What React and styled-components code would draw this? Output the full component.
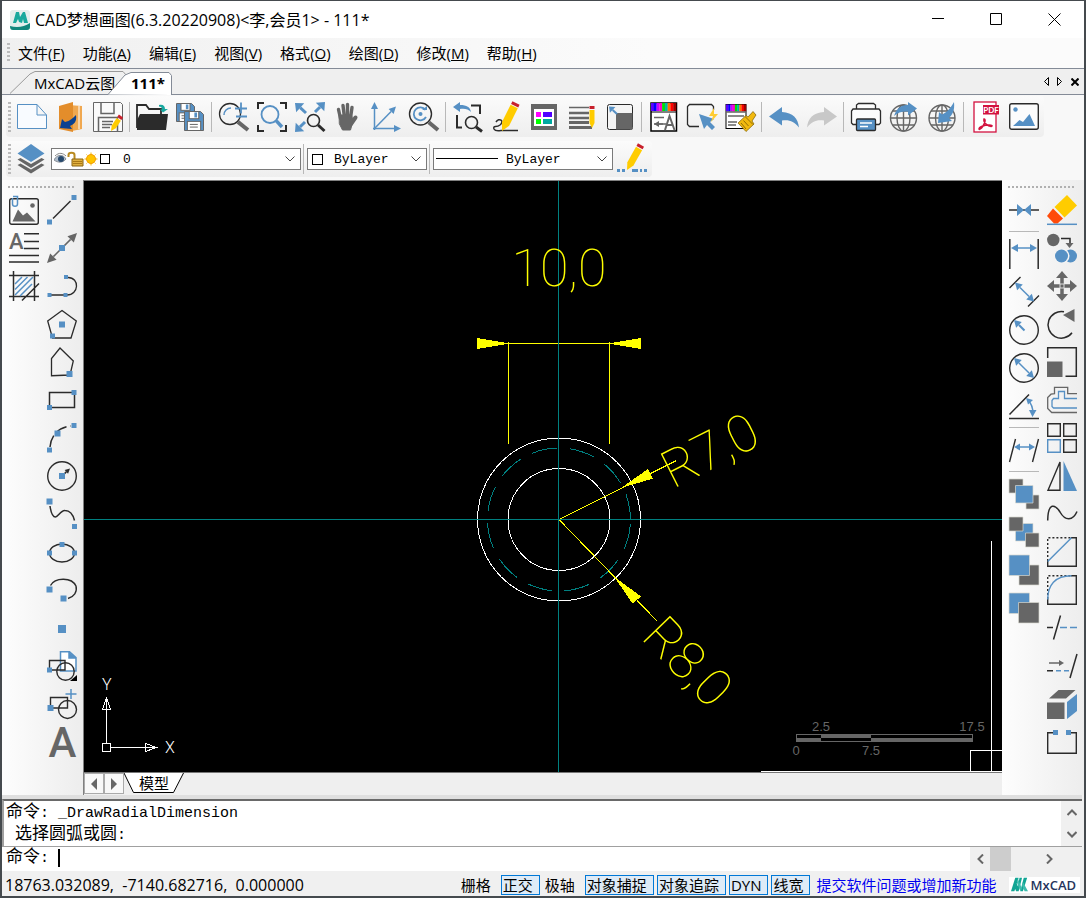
import React, { useState } from "react";
import styled, { createGlobalStyle, ThemeProvider } from "styled-components";

const theme = {
  color: {
    blue: "#5690c4",
    gray: "#666666",
    ink: "#2b2b2b",
    panel: "#f0f0f0",
    line: "#848b97",
    teal: "#008080",
    yellow: "#ffff00",
  },
  font: {
    ui: '"Open Sans", "Noto Sans CJK SC", sans-serif',
    mono: '"Liberation Mono", "Noto Sans CJK SC", monospace',
  },
};

const B = theme.color.blue;
const G = theme.color.gray;
const K = theme.color.ink;

const GlobalStyle = createGlobalStyle`
  * {
    box-sizing: border-box;
  }

  body {
    margin: 0;
    background: #f0f0f0;
    color: #000;
    font-family: ${theme.font.ui};
    font-size: 15px;
  }

  button, select, input {
    font: inherit;
    color: inherit;
    margin: 0;
    padding: 0;
    border: none;
    border-radius: 0;
    background: none;
  }
`;

/* ---------- drawing helpers ---------- */

const Dot = ({ x, y, s = 5 }) => <rect x={x - s / 2} y={y - s / 2} width={s} height={s} fill={B} stroke="none" />;

const Arrow = ({ x1, y1, x2, y2, color = B, size = 7, wide = 4, both = false, w = 1.5 }) => {
  const len = Math.hypot(x2 - x1, y2 - y1);
  const ux = (x2 - x1) / len;
  const uy = (y2 - y1) / len;
  const head = (x, y, dx, dy) =>
    `${x},${y} ${x - dx * size - dy * wide},${y - dy * size + dx * wide} ${x - dx * size + dy * wide},${y - dy * size - dx * wide}`;
  return (
    <g>
      <line
        x1={both ? x1 + ux * size : x1}
        y1={both ? y1 + uy * size : y1}
        x2={x2 - ux * size}
        y2={y2 - uy * size}
        stroke={color}
        strokeWidth={w}
      />
      <polygon points={head(x2, y2, ux, uy)} fill={color} stroke="none" />
      {both && <polygon points={head(x1, y1, -ux, -uy)} fill={color} stroke="none" />}
    </g>
  );
};

const Lens = ({ x, y, r, hx, hy, color = K, w = 1.5, hw = 2.5, handle }) => (
  <g>
    <circle cx={x} cy={y} r={r} stroke={color} strokeWidth={w} />
    <line x1={x + r * 0.75} y1={y + r * 0.75} x2={hx} y2={hy} stroke={handle || color} strokeWidth={hw} />
  </g>
);

const Pencil = ({ tip, top, w = 7 }) => {
  const [x1, y1] = tip;
  const [x2, y2] = top;
  const len = Math.hypot(x2 - x1, y2 - y1);
  const ux = (x2 - x1) / len;
  const uy = (y2 - y1) / len;
  const h = w / 2;
  const p = (d, s) => `${x1 + ux * d - uy * s * h},${y1 + uy * d + ux * s * h}`;
  return (
    <g stroke="none">
      <polygon points={`${x1},${y1} ${p(w, 1)} ${p(len - 4, 1)} ${p(len - 4, -1)} ${p(w, -1)}`} fill="#fc0" />
      <polygon points={`${p(len - 3, 1)} ${p(len, 1)} ${p(len, -1)} ${p(len - 3, -1)}`} fill="#c8202c" />
    </g>
  );
};

const Rainbow = ({ x, y, w, h }) => {
  const list = ["#5a00ff", "#0000ff", "#c800ff", "#ff00c8", "#00e000", "#00b8a0", "#ff7000", "#ff0000", "#a00000"];
  return list.map((c, i) => (
    <rect key={c} x={x + (w / list.length) * i} y={y} width={w / list.length + 0.2} height={h} fill={c} stroke="none" />
  ));
};

const Globe = ({ x, y }) => (
  <g stroke={G} strokeWidth="1.4">
    <circle cx={x} cy={y} r="13" />
    <ellipse cx={x} cy={y} rx="6.5" ry="13" />
    <path d={`M${x} ${y - 13}v26M${x - 13} ${y}h26M${x - 11} ${y - 7}h22M${x - 11} ${y + 7}h22`} />
  </g>
);

const Disk = ({ x, y, s }) => (
  <g>
    <path d={`M${x} ${y}h${s - 3}l3 3v${s - 3}h${-s}z`} fill={B} stroke={G} />
    <rect x={x + s * 0.25} y={y} width={s * 0.5} height={s * 0.38} fill="#fff" stroke={G} />
    <rect x={x + s * 0.52} y={y + 1} width={s * 0.14} height={s * 0.26} fill={B} stroke="none" />
    <rect x={x + s * 0.15} y={y + s * 0.52} width={s * 0.7} height={s * 0.48} fill="#fff" stroke={G} />
    <path d={`M${x + s * 0.28} ${y + s * 0.68}h${s * 0.42}M${x + s * 0.28} ${y + s * 0.82}h${s * 0.42}`} stroke={G} />
  </g>
);

/* ---------- 30 x 30 icon drawings ---------- */

const icons = {
  newFile: <path d="M.5 2.5H20L29.5 13V26.5H.5zM20 2.5V13h9.5" fill="#f8fbff" stroke={B} />,
  openFile: (
    <g stroke="none">
      <path d="M13 3l14 1v23l-10 2z" fill="#f0a850" />
      <path d="M24 4v23" stroke="#fff" />
      <path d="M4 4L18 0v30L4 27z" fill="#e38d2b" />
      <path d="M5 26l2-9 3 3c5-1 8-4 11-7 1 7-2 9-6 11l2 3z" fill="#0a4090" />
    </g>
  ),
  save: (
    <g stroke={G}>
      <path d="M.5.5h27l2 2v27H.5z" fill="#fafafa" />
      <path d="M8 .5v11h13V.5M5.5 29V15.5h19V29" strokeWidth="1.5" />
      <path d="M9 19.5h11M9 22.5h10M9 25.5h8" strokeWidth="1.5" />
      <Pencil tip={[18, 29]} top={[28, 14]} w={5} />
    </g>
  ),
  folder: (
    <g>
      <path d="M0 26V3h9l3 4h12v6" stroke={K} strokeWidth="1.8" />
      <path d="M3 12h28l-2 16H0V18z" fill={K} stroke="none" />
      <path d="M22 3c4-1 6 1 6 4h3l-5 3.500-3-3h2c0-2-1-3-3-3z" fill="#18a8a0" stroke="none" />
    </g>
  ),
  saveAll: (
    <g>
      <Disk x={1.5} y={1.500} s={18} />
      <Disk x={9.5} y={9.5} s={19} />
    </g>
  ),
  zoomScale: (
    <g>
      <Lens x={11} y={12} r={10.500} hx={29} hy={28} w={1.3} hw={4} handle={G} />
      <path d="M5 13c0-4 3-7 7-7" stroke={B} strokeWidth="1.5" />
      <path d="M16 6.5h12M22 .5v11M17 14.5h11" stroke={B} strokeWidth="1.8" />
    </g>
  ),
  zoomWindow: (
    <g>
      <path d="M1 7V1h6M23 1h6v6M29 23v6h-6M7 29H1v-6" stroke={K} strokeWidth="2" />
      <Lens x={13} y={12.5} r={8.5} hx={25} hy={25} color={B} w={1.8} hw={3.500} />
    </g>
  ),
  zoomExtents: (
    <g>
      <Arrow x1={11} y1={11} x2={0} y2={1} size={7} wide={6} w={3} />
      <Arrow x1={20} y1={10} x2={30} y2={0} size={7} wide={6} w={3} />
      <Arrow x1={10} y1={20} x2={0} y2={30} size={7} wide={6} w={3} />
      <Lens x={18.5} y={18.5} r={6} hx={29.5} hy={29} w={1.6} hw={3} />
    </g>
  ),
  pan: (
    <g stroke={G} strokeLinecap="round" strokeWidth="3.400">
      <path d="M5.500 7.500l2 9M10 3.500L11.500 16M14.500 2.500V16M19 5.500L17.500 16" />
      <path d="M22.500 15.500L18 22" strokeWidth="4" />
      <path d="M6.500 13h12l1.500 6-2.500 9H9.500L6.500 22z" fill={G} strokeWidth="1" />
    </g>
  ),
  ucs: (
    <g>
      <Arrow x1={3.5} y1={28} x2={3.500} y2={0} wide={3.5} />
      <Arrow x1={2} y1={26.5} x2={30} y2={26.5} wide={3.5} />
      <Arrow x1={4} y1={26} x2={25} y2={4.5} wide={3.5} />
    </g>
  ),
  zoomRealtime: (
    <g>
      <Lens x={11.500} y={12} r={11} hx={29} hy={28} w={1.4} hw={4} handle={G} />
      <path d="M16.500 8a6.500 6.500 0 1 0 .5 7" stroke={B} strokeWidth="1.800" />
      <circle cx="11.500" cy="12" r="2" fill={B} stroke="none" />
      <path d="M13 8h5V4z" fill={B} stroke="none" />
    </g>
  ),
  zoomPrev: (
    <g>
      <path d="M0 5l7-5v3c7 0 10 2 11 7-3-3-6-3.500-11-3v3z" fill={B} stroke="none" />
      <path d="M4 13v12.500h5M18 3.500h9V12" stroke={K} strokeWidth="2" />
      <Lens x={18.500} y={20.500} r={6} hx={29} hy={29.500} w={1.6} hw={3} />
    </g>
  ),
  sketch: (
    <g>
      <path d="M5 20c3-5 9-1 4 3-4 3-7 0-6 4 1 2 4 2 7 1.500h17" stroke={K} strokeWidth="1.500" />
      <Pencil tip={[11, 29]} top={[25, 1]} w={8} />
    </g>
  ),
  properties: (
    <g stroke="none">
      <path d="M2 2h26v26H2z" fill={G} />
      <path d="M5 7h20v17H5z" fill="#fff" />
      <path d="M7 10h5v5H7z" fill="#f0f" />
      <path d="M14 10h9v5h-9z" fill="#5000ff" />
      <path d="M7 17h5v5H7z" fill="#0f0" />
      <path d="M14 17h9v5h-9z" fill="#00a8a0" />
    </g>
  ),
  lineweight: (
    <g stroke={G}>
      <path d="M2 5.500h20" strokeWidth="1.500" />
      <path d="M2 11h20M2 16h20" strokeWidth="2.500" />
      <path d="M2 20.500h20M2 25.500h23" strokeWidth="3" />
      <Pencil tip={[25, 26]} top={[25, 4]} w={5} />
    </g>
  ),
  viewport: (
    <g>
      <rect x="2.500" y="2.500" width="25" height="25" rx="2" stroke={K} fill="#f4f4f4" />
      <rect x="11" y="11" width="16.500" height="16.500" fill={G} stroke="none" />
      <Arrow x1={12} y1={12} x2={4} y2={4.500} size={5} w={2} />
    </g>
  ),
  textStyle: (
    <g>
      <rect x="2" y="1" width="25.500" height="28" fill="#fff" stroke="#000" strokeWidth="1.500" />
      <Rainbow x={2} y={1} w={25} h={8} />
      <path d="M2 10h25.500" stroke="#000" />
      <path d="M5 15.500h10M5 22h12" stroke={G} strokeWidth="1.500" />
      <Arrow x1={14} y1={22} x2={5} y2={22} color={G} size={5} wide={3} />
      <path d="M16 28l4.500-14L25.500 28M17.500 23h6" stroke={G} strokeWidth="2" />
    </g>
  ),
  quickSelect: (
    <g>
      <path d="M12 24.500H2.500l-2-2v-18l2-2h22l2 2V8" stroke={K} strokeWidth="1.300" />
      <path d="M12 12l15 5-4 3 5 5-3 3-5-5-3 4z" fill={B} stroke="none" />
      <path d="M27 6l-5 8h4l-2 6 7-8h-4z" fill="#fc3" stroke="none" />
    </g>
  ),
  matchProp: (
    <g>
      <rect x="1" y="2.500" width="20" height="24" fill="#fff" stroke="#000" />
      <Rainbow x={1} y={2.500} w={20} h={7} />
      <path d="M1 10h20M3 14h16M3 20h9M3 23h8" stroke={G} strokeWidth="1.500" />
      <path d="M28 9.500l-5 5.500-2-1.500-8 7.500 8 8.500 8-7.500-2-3 4-6z" fill="#f2b90f" stroke="#7a5c00" strokeWidth=".7" />
      <path d="M20 14.500l8 8M16 21l5 6M18.500 18.500l5 5.500" stroke="#7a5c00" strokeWidth=".8" />
    </g>
  ),
  undo: <path d="M0 14.500L13 5v5c11 1 16 6 17 15.500C25 19 20 17.500 13 18.500v5z" fill={B} stroke="none" />,
  redo: <path d="M30 14.500L17 5v5C6 11 1 16 0 25.500c5-6.500 10-8 17-7v5z" fill="#c8c8c8" stroke="none" />,
  print: (
    <g stroke={K} strokeWidth="1.300">
      <path d="M5.500 7V3l2-1.500h15l2 1.500v4M5 22.500H2l-1.500-1.500V9L2 7h26l1.500 2v12L28 22.500h-3" fill="#fcfcfc" />
      <rect x="5.500" y="17" width="19" height="11.500" fill={B} rx="1" />
      <path d="M9 21h12M9 24.500h8" stroke="#fff" strokeWidth="1.500" />
    </g>
  ),
  publish: (
    <g>
      <Globe x={14.500} y={16} />
      <path d="M5 14C8 5 13 3 19 3V0l9 6.500-9 7V9.500C14 9 9 10 5 14z" fill={B} stroke="none" />
    </g>
  ),
  download: (
    <g>
      <Globe x={15} y={16} />
      <path d="M27 0c1 9-2 13-5 16l3 3-14 2 1-11 3 2.500c4-2 8-5 12-12.500z" fill={B} stroke="none" />
    </g>
  ),
  pdf: (
    <g>
      <rect x="3" y="0" width="22" height="30" fill="#fff" stroke="#d3123f" strokeWidth="1.300" />
      <rect x="12" y="3" width="16" height="9.500" fill="#d3123f" stroke="none" />
      <text x="20" y="10.500" fontSize="8" fontWeight="700" fill="#fff" stroke="none" textAnchor="middle" fontFamily="Lato, sans-serif">PDF</text>
      <path d="M13 17c2 0 1 4-1 7-2 3-4 4-4 3 0-2 5-4 10-4 3 0 4 1 2 1.500-3 0-8-4-7-7.500z" stroke="#d3123f" strokeWidth="1.500" />
    </g>
  ),
  image: (
    <g>
      <rect x=".7" y="1.700" width="28.600" height="25.600" rx="2" fill="#fcfcfc" stroke={K} strokeWidth="1.400" />
      <circle cx="6.500" cy="7.500" r="2.200" fill={B} stroke="none" />
      <path d="M4 24l6.500-6 3.500 2 6.500-8L26 24z" fill={B} stroke="none" />
    </g>
  ),
  layers: (
    <g stroke="none">
      <path d="M.5 21l3-1.500 10.500 6 10.500-6 3 1.500L14 29.500z" fill={G} />
      <path d="M.5 15.500l3-1.500L14 20l10.500-6 3 1.500L14 24z" fill={G} />
      <path d="M14 0l13.500 9.500L14 18 .5 9.500z" fill={B} />
    </g>
  ),
  linePencil: (
    <g>
      <path d="M0 26.500h3M5 26.500h3M15 26.500h6M23 26.500h2M27 26.500h3" stroke={B} strokeWidth="3" />
      <Pencil tip={[10, 26]} top={[24, 1]} w={7} />
    </g>
  ),

  /* draw panel */
  rasterImage: (
    <g>
      <rect x=".7" y="3.700" width="28.600" height="25.600" rx="2" stroke={K} strokeWidth="1.400" />
      <path d="M3.500 26.500L9 14.500l5 6 4-3 8.500 9z" fill={G} stroke="none" />
      <circle cx="23.500" cy="10.500" r="2.300" fill={G} stroke="none" />
      <path d="M3.500 3v6c0 3 5 3 5 0V1.500H4" stroke={B} strokeWidth="1.500" />
    </g>
  ),
  mtext: (
    <g stroke={K} strokeWidth="1.500">
      <text x="0" y="16" fontSize="22" fontWeight="500" fill={G} stroke="none" fontFamily="Roboto, sans-serif">A</text>
      <path d="M15 .8h15M15 8.500h15M15 15.500h15M0 22.500h30M0 29h30" />
    </g>
  ),
  hatch: (
    <g stroke={K} strokeWidth="1.500">
      <path d="M4.500 0v30M25.500 0v30M0 4.500h30M0 25.500h30M13 29.500l17-17" />
      <path d="M6 13l7-7M6 18.500L18.500 6M6 24L24 6M12 24l11-11M18 18l-7 7" stroke={B} />
    </g>
  ),
  line: (
    <g>
      <path d="M6 23.500L23.500 6" stroke={K} strokeWidth="1.500" />
      <Dot x={2.500} y={27} /><Dot x={27} y={2.500} />
    </g>
  ),
  xline: (
    <g>
      <Arrow x1={0} y1={30} x2={30} y2={0} color={G} size={9} wide={4.500} both />
      <Dot x={15} y={15} s={6} />
    </g>
  ),
  pline: (
    <g>
      <path d="M4 24h14M21 6.500c12 0 11 17.500-1 17.500" stroke={K} strokeWidth="1.300" />
      <Dot x={19} y={6} s={4} /><Dot x={2.500} y={24} s={4} /><Dot x={18.500} y={24} s={4} />
    </g>
  ),
  polygon: (
    <g>
      <path d="M15 1.500L29.300 12 24 29H5.500L.7 12z" stroke={K} strokeWidth="1.300" />
      <Dot x={15} y={15.500} s={6} /><Dot x={5.500} y={27} />
    </g>
  ),
  freePolygon: (
    <g>
      <path d="M13 1l13.300 13-3.300 14-18.500.7V11.500z" stroke={K} strokeWidth="1.300" />
      <Dot x={22.500} y={27} s={6} />
    </g>
  ),
  rectangle: (
    <g>
      <rect x="2.500" y="7.500" width="25" height="15" stroke={K} strokeWidth="1.500" />
      <Dot x={27} y={7.500} /><Dot x={2.500} y={22.500} />
    </g>
  ),
  arc: (
    <g>
      <path d="M3 24C4 12 12 4 24 3" stroke={K} strokeWidth="1.500" strokeDasharray="12 4" />
      <Dot x={2.500} y={27} /><Dot x={10.500} y={10.500} s={6} /><Dot x={27} y={2.500} />
    </g>
  ),
  circle: (
    <g>
      <circle cx="15" cy="15" r="14.300" stroke={K} strokeWidth="1.400" />
      <Arrow x1={15} y1={15} x2={23} y2={7.500} color={K} size={5} wide={2.500} />
      <Dot x={15} y={15} s={6} />
    </g>
  ),
  spline: (
    <g>
      <path d="M3 7c1 7 3 11 5.500 11S14 11 18 11.500c5 0 8 4 9.500 10" stroke={K} strokeWidth="1.500" />
      <Dot x={2.500} y={2.500} s={6} /><Dot x={27.500} y={27.500} />
    </g>
  ),
  ellipse: (
    <g>
      <ellipse cx="15" cy="16" rx="12.500" ry="9" stroke={K} strokeWidth="1.400" />
      <Dot x={15} y={7.500} /><Dot x={2.500} y={16} /><Dot x={27.500} y={16} />
    </g>
  ),
  ellipseArc: (
    <g>
      <path d="M3.500 10.500C8 2 25 2 29 11c1.500 6-2 11-8 12.500" stroke={K} strokeWidth="1.400" />
      <Dot x={2.500} y={14.500} s={6} /><Dot x={16.500} y={23.500} s={6} />
    </g>
  ),
  point: <Dot x={15} y={16} s={8} />,
  insertBlock: (
    <g>
      <path d="M13.500 20V.7h9l6.500 6V20zM22 .7V7h7" fill="#fff" stroke={B} strokeWidth="1.500" />
      <path d="M22 .7V7h7z" fill={B} stroke="none" />
      <path d="M2.500 9.500h15.500V19H2.500z" stroke={K} strokeWidth="1.400" />
      <circle cx="18.500" cy="20.500" r="8.700" stroke={K} strokeWidth="1.400" />
      <path d="M30 24v6h-7z" fill="#000" stroke="none" />
      <Dot x={2.500} y={19} />
    </g>
  ),
  makeBlock: (
    <g>
      <path d="M3.500 8.500h17V19h-17z" stroke={K} strokeWidth="1.400" />
      <circle cx="20.500" cy="20.500" r="9" stroke={K} strokeWidth="1.400" />
      <path d="M18.500 5h11M24 0v10" stroke={B} strokeWidth="1.500" />
      <Dot x={3.500} y={19} s={6} />
    </g>
  ),
  text: <text x="15.500" y="30" fontSize="42" fontWeight="500" fill={G} stroke="none" textAnchor="middle" fontFamily="Roboto, sans-serif">A</text>,

  /* dimension panel */
  join: (
    <g>
      <path d="M0 15h30" stroke={K} strokeWidth="1.500" />
      <path d="M8 9v12l7-6zM22 9v12l-7-6z" fill={B} stroke="none" />
    </g>
  ),
  dimLinear: (
    <g>
      <path d="M.8 0v30M29.200 0v30" stroke={K} strokeWidth="1.500" />
      <Arrow x1={2} y1={9} x2={28} y2={9} both />
    </g>
  ),
  dimAligned: (
    <g>
      <path d="M.5 11L11.500 0M19 29.500L30 18.500" stroke={K} strokeWidth="1.400" />
      <Arrow x1={6} y1={5.500} x2={25} y2={24.500} both />
    </g>
  ),
  dimRadius: (
    <g>
      <circle cx="15" cy="15" r="14.300" stroke={K} strokeWidth="1.400" />
      <Arrow x1={15.500} y1={15.500} x2={5} y2={5} w={2} />
    </g>
  ),
  dimDiameter: (
    <g>
      <circle cx="15" cy="15" r="14.300" stroke={K} strokeWidth="1.400" />
      <Arrow x1={5} y1={5} x2={25} y2={25} both />
    </g>
  ),
  dimAngular: (
    <g>
      <path d="M.5 23.500L20 3.500M0 27.500h30" stroke={K} strokeWidth="1.500" />
      <path d="M19 9c4 4 5 8 5 14" stroke={B} strokeWidth="1.500" />
      <path d="M17 7l7 2-5 4.500zM20 19h7.500L23.500 26z" fill={B} stroke="none" />
    </g>
  ),
  dimOblique: (
    <g>
      <path d="M.5 27l6-23M23.500 27l6-23" stroke={K} strokeWidth="1.400" />
      <Arrow x1={5} y1={12} x2={26} y2={12} size={6} wide={3.500} both />
    </g>
  ),
  orderFront: (
    <g stroke="#d8d8d0" strokeWidth=".7">
      <path d="M0 0h14v14H0zM17 16h13v14H17z" fill={G} />
      <path d="M6.500 6.500H24V24H6.500z" fill={B} />
    </g>
  ),
  orderBack: (
    <g stroke="#d8d8d0" strokeWidth=".7">
      <path d="M6.500 6.500H24V24H6.500z" fill={B} />
      <path d="M0 0h14v14H0zM16.500 16H30v14H16.500z" fill={G} />
    </g>
  ),
  orderAbove: (
    <g stroke="#d8d8d0" strokeWidth=".7">
      <path d="M10 10h20v20H10z" fill={G} />
      <path d="M0 0h20.500v20.500H0z" fill={B} />
    </g>
  ),
  orderUnder: (
    <g stroke="#d8d8d0" strokeWidth=".7">
      <path d="M0 0h20.500v20.500H0z" fill={B} />
      <path d="M9.500 9.500H30V30H9.500z" fill={G} />
    </g>
  ),

  /* modify panel */
  erase: (
    <g stroke="none">
      <path d="M20 0l10 10.500L17.500 22.500 7.500 12z" fill="#fc0" />
      <path d="M6 13.500l10 10-5.500 5H7l-7-7.500z" fill="#ff4b0a" />
      <path d="M0 29.300h30" stroke={B} strokeWidth="1.500" />
    </g>
  ),
  copy: (
    <g stroke="none">
      <circle cx="6.300" cy="7" r="6.200" fill={G} />
      <path d="M14 5.500h9V11" stroke={K} strokeWidth="1.500" />
      <path d="M18.500 10h8L22.500 15z" fill={G} />
      <circle cx="23.500" cy="23" r="6.500" fill={B} />
      <circle cx="15" cy="23" r="7.500" fill="#f4f4f4" />
      <circle cx="14.500" cy="23" r="6.500" fill={B} />
    </g>
  ),
  move: (
    <g>
      <Arrow x1={15} y1={0} x2={15} y2={30} color={G} size={7} wide={6} w={3.500} both />
      <Arrow x1={0} y1={15} x2={30} y2={15} color={G} size={7} wide={6} w={3.500} both />
      <rect x="13" y="13" width="4" height="4" fill={G} stroke="#ddd" />
    </g>
  ),
  rotate: (
    <g>
      <path d="M17 2.800a13.300 13.300 0 1 0 8 21" stroke={K} strokeWidth="1.500" />
      <path d="M16 6L27.500 0v13z" fill={G} stroke="none" />
    </g>
  ),
  scale: (
    <g>
      <path d="M.7 11V.7h28.600v28.600H18.500" stroke={K} strokeWidth="1.500" />
      <path d="M0 14.500h15.500V30H0z" fill={G} stroke="none" />
    </g>
  ),
  offset: (
    <g strokeWidth="1.300">
      <path d="M30 8.700h-9.300V2.300H7.500v6.400L4 9.200.7 12.500v11l4 4H30" stroke={G} />
      <path d="M30 13.500H17.500v-7h-6v7H6.500l-1.500 2v6l1.500 1.500H30" stroke={B} />
    </g>
  ),
  array: (
    <g stroke={K} strokeWidth="1.400">
      <path d="M.7.7h12.600v12.600H.7zM16.700.7h12.600v12.600H16.700zM16.700 16.700h12.600v12.600H16.700z" />
      <path d="M.7 16.700h12.600v12.600H.7z" stroke={B} />
    </g>
  ),
  mirror: (
    <g>
      <path d="M13 1v28.300H1z" stroke={K} strokeWidth="1.400" />
      <path d="M16.500 0L30 30H16.500z" fill={B} stroke="none" />
    </g>
  ),
  wave: <path d="M.7 21.500C1 3 8 5 13 13c5 9 13 9 17-.5" stroke={K} strokeWidth="1.500" />,
  chamfer: (
    <g stroke={K} strokeWidth="1.400">
      <path d="M.7 24v5.300h28.600V.7H24" />
      <path d="M.7 24V.7H24" strokeDasharray="2 2" />
      <path d="M.7 24.500L24.500.7" stroke={B} />
    </g>
  ),
  fillet: (
    <g stroke={K} strokeWidth="1.400">
      <path d="M.7 24v5.300h28.600V.7H24" />
      <path d="M.7 24V.7H24" strokeDasharray="2 2" />
      <path d="M.7 24.500C.7 10 8 .7 24.500.7" stroke={B} />
    </g>
  ),
  breakLine: (
    <g stroke={K} strokeWidth="1.500">
      <path d="M0 14.500h6M13.500 2.500l-7 24" />
      <path d="M13 14.500h7M23 14.500h7" stroke={B} />
    </g>
  ),
  extend: (
    <g stroke={K} strokeWidth="1.500">
      <Arrow x1={2} y1={12} x2={17} y2={12} color={G} size={5} wide={3} />
      <path d="M0 19.700h6M30 3l-7 24" />
      <path d="M9 19.700h5M17 19.700h5" stroke={B} />
    </g>
  ),
  explode: (
    <g stroke="none">
      <path d="M0 13.500h17.500V30H0zM2 9.500L11.500 1h17L19 9.500z" fill={G} />
      <path d="M20 13l10-8v17l-10 8z" fill={B} />
    </g>
  ),
  gap: (
    <g>
      <path d="M11 5.700H8M6 5.700H.7v20.600h28.600V5.700H24M22 5.700h-2" stroke={K} strokeWidth="1.400" />
      <Dot x={8.500} y={5.500} /><Dot x={21.500} y={5.500} />
    </g>
  ),
};

const Icon = ({ name }) => (
  <svg width="30" height="30" viewBox="0 0 30 30" fill="none" overflow="visible" aria-hidden="true">
    {icons[name]}
  </svg>
);

/* "|" is a separator */
const standardBar = [
  "newFile", "openFile", "save", "|", "folder", "saveAll", "|",
  "zoomScale", "zoomWindow", "zoomExtents", "pan", "ucs", "zoomRealtime", "|",
  "zoomPrev", "sketch", "properties", "lineweight", "viewport", "|",
  "textStyle", "quickSelect", "matchProp", "|", "undo", "redo", "|",
  "print", "publish", "download", "|", "pdf", "image",
];

const drawLeft = ["rasterImage", "mtext", "hatch"];
const drawRight = [
  "line", "xline", "pline", "polygon", "freePolygon", "rectangle", "arc", "circle",
  "spline", "ellipse", "ellipseArc", "point", "insertBlock", "makeBlock", "text",
];
const dimensionList = [
  "join", "|", "dimLinear", "dimAligned", "dimRadius", "dimDiameter", "dimAngular", "|",
  "dimOblique", "|", "orderFront", "orderBack", "orderAbove", "orderUnder",
];
const modifyList = [
  "erase", "copy", "move", "rotate", "scale", "offset", "array", "mirror",
  "wave", "chamfer", "fillet", "breakLine", "extend", "explode", "gap",
];

const menus = [
  ["文件", "F"], ["功能", "A"], ["编辑", "E"], ["视图", "V"],
  ["格式", "O"], ["绘图", "D"], ["修改", "M"], ["帮助", "H"],
];

const Tools = ({ list, vertical }) =>
  list.map((name, i) =>
    name === "|" ? (
      <Separator key={i} $vertical={vertical} />
    ) : (
      <ToolButton key={i} type="button" aria-label={name}>
        <Icon name={name} />
      </ToolButton>
    )
  );

const Chevron = () => (
  <svg width="10" height="6" viewBox="0 0 10 6" fill="none" stroke="#444" aria-hidden="true">
    <path d="M.5.500L5 5 9.500.500" />
  </svg>
);

const ColorBox = () => (
  <svg width="11" height="11" viewBox="0 0 11 11" aria-hidden="true">
    <rect x=".5" y=".5" width="10" height="10" fill="#fff" stroke="#000" />
  </svg>
);

const LayerState = () => (
  <svg width="57" height="16" viewBox="0 0 57 16" fill="none" aria-hidden="true">
    <path d="M0 9C3 3 9 3 12 8 9 12 4 12 0 9z" fill="#aebccb" stroke="#8a8f96" />
    <circle cx="7" cy="8" r="3" fill="#27496d" />
    <path d="M1 5c4-4 8-3 11 0" stroke="#888" />
    <path d="M14.500 6V4c0-3 6-3 6 0v5" stroke="#b88a20" strokeWidth="2" />
    <path d="M18 8h11v7H18z" fill="#e0b040" stroke="#8a6510" />
    <path d="M19 10.500h9M19 12.500h9" stroke="#a87818" />
    <circle cx="37" cy="8" r="4.500" fill="#ffc400" stroke="#f39a00" />
    <path d="M37 1.500v2M37 12.500v2M30.500 8h2M41.500 8h2M32.500 3.500l1 1M41.500 3.500l-1 1M32.500 12.500l1-1M41.500 12.500l-1-1" stroke="#f7b500" />
    <rect x="46.500" y="3.500" width="9" height="9" fill="#fff" stroke="#000" />
  </svg>
);

const LineSample = () => (
  <svg width="62" height="2" aria-hidden="true">
    <path d="M0 .500h62" stroke="#000" />
  </svg>
);

const MxLogo = ({ size, color = "#12a594" }) => (
  <svg width={size} height={size} viewBox="0 0 20 20" aria-hidden="true">
    <path d="M5 2h4l-5 16H0zM10 2h3l-4 16H6l-2-5 2-6 2 5zM15 2h4l-5 16h-3z" fill={color} />
    <path d="M14 7l6 11h-4l-3-7zM8 3l5 12-2 3-4-10z" fill="#3fbcae" />
  </svg>
);

const AppMark = () => (
  <svg width="20" height="20" viewBox="0 0 20 20" aria-hidden="true">
    <rect width="20" height="20" rx="3" fill="#e3eeec" />
    <path d="M0 16c7 2 14 1 20-3v4c0 2-1 3-3 3H3c-2 0-3-1-3-4z" fill="#12867c" />
    <path d="M6 2h3l1 5 3-5h2l3 11h-4l-1-4-1 4-3-1-1-3-2 4H3z" fill="#18a99d" />
  </svg>
);

/* ---------- drawing area ---------- */

const Drawing = () => (
  <Canvas viewBox="84 181 918 591" preserveAspectRatio="xMidYMid slice" role="img" aria-label="模型">
    <g fill="none" shapeRendering="crispEdges">
      <g stroke="#fff">
        <circle cx="559" cy="519.500" r="81.500" />
        <circle cx="559" cy="519.500" r="51" />
        <path d="M991.500 541v231M761 771.500h241M970.500 771.500v-21H1002" />
      </g>
      <path
        d="M630.500 519.500a71.500 71.500 0 1 0 -143 0a71.500 71.500 0 1 0 143 0"
        stroke={theme.color.teal}
        strokeDasharray="25.500 12.500"
      />
      <g stroke={theme.color.yellow}>
        <path d="M508 343.500h102M508.500 342v102M609.500 342v102" />
        <path d="M559 519.500L676.500 460.500M559 519.500L657.500 621.500" />
        <g fill={theme.color.yellow} stroke="none">
          <path d="M510 343.500L477 338v11zM608 343.500l33-5.500v11z" />
          <path d="M621 488L648 469l5 9.500zM614 576.500l27 20-8.500 7z" />
        </g>
      </g>
      <path d="M558.500 181v591" stroke={theme.color.teal} />
      <path d="M84 519.500h918" stroke={theme.color.teal} />
      <g stroke="#fff">
        <path d="M102.500 743.500h8v8h-8zM106.500 743V698M111 747.500h46M106.500 698l-4 11h8zM156.500 747.500l-11-4v8z" />
      </g>
      <g fill={G}>
        <path d="M796 734h177v8H796zM797 735v3h24v-3zM871 735v3h101v-3zM821 738v3h50v-3z" fillRule="evenodd" />
      </g>
    </g>
    <CadText x="559" y="286" textAnchor="middle">10,0</CadText>
    <CadText transform="translate(673 489) rotate(-26.800)">R7,0</CadText>
    <CadText transform="translate(640 638) rotate(45.900)">R8,0</CadText>
    <AxisText x="102" y="690">Y</AxisText>
    <AxisText x="165" y="753">X</AxisText>
    <ScaleText x="821" y="731">2.5</ScaleText>
    <ScaleText x="972" y="731">17.5</ScaleText>
    <ScaleText x="796" y="755">0</ScaleText>
    <ScaleText x="871" y="755">7.5</ScaleText>
  </Canvas>
);

const App = () => {
  const [toggles, setToggles] = useState({
    栅格: false, 正交: true, 极轴: false, 对象捕捉: true, 对象追踪: true, DYN: true, 线宽: true,
  });

  const flip = (name) => setToggles({ ...toggles, [name]: !toggles[name] });

  return (
    <ThemeProvider theme={theme}>
      <GlobalStyle />
      <Window>
        <TitleBar>
          <AppMark />
          <h1>CAD梦想画图(6.3.20220908)&lt;李,会员1&gt; - 111*</h1>
          <button type="button" aria-label="minimize">
            <svg width="13" height="13" stroke="#000"><path d="M0 5.500h12" /></svg>
          </button>
          <button type="button" aria-label="maximize">
            <svg width="13" height="13" stroke="#000" fill="none"><path d="M.5.500h11v11H.5z" /></svg>
          </button>
          <button type="button" aria-label="close">
            <svg width="13" height="13" stroke="#000"><path d="M.5.500l12 12M12.500.500l-12 12" /></svg>
          </button>
        </TitleBar>

        <MenuBar>
          <Grip $size={20} />
          {menus.map(([label, key]) => (
            <button key={key} type="button">{label}(<u>{key}</u>)</button>
          ))}
        </MenuBar>

        <DocTabs>
          <DocTab type="button" $width={117}>
            <svg width="117" height="23" fill="#f0f0f0" stroke="#9a9a9a" aria-hidden="true">
              <path d="M0 22.500L20 3l5-2.500h88l3.500 4V23" />
            </svg>
            <span>MxCAD云图</span>
          </DocTab>
          <DocTab type="button" $width={64} $active>
            <svg width="64" height="23" fill="#fff" stroke="#848b97" aria-hidden="true">
              <path d="M0 22.500L17 3l6-2.500h38l2.500 3V23" />
            </svg>
            <span>111*</span>
          </DocTab>
          <TabControls>
            <button type="button" aria-label="previous tab">
              <svg width="6" height="9" fill="none" stroke="#000"><path d="M5.500.5v8l-4-4z" /></svg>
            </button>
            <button type="button" aria-label="next tab">
              <svg width="6" height="9" fill="none" stroke="#000"><path d="M.5.500v8l4-4z" /></svg>
            </button>
            <button type="button" aria-label="close tab">
              <svg width="8" height="8" stroke="#000" strokeWidth="2"><path d="M.5.500l7 7M7.500.500l-7 7" /></svg>
            </button>
          </TabControls>
        </DocTabs>

        <Rebar>
          <Toolbar $height={41}>
            <Grip $size={30} />
            <Tools list={standardBar} />
          </Toolbar>
          <Toolbar $height={36}>
            <Grip $size={30} />
            <Tools list={["layers"]} />
            <Combo $width={250} $gap={12}>
              <LayerState />
              <select aria-label="layer"><option>0</option></select>
              <Chevron />
            </Combo>
            <Separator />
            <Combo $width={120} $gap={11} $inset={4}>
              <ColorBox />
              <select aria-label="color"><option>ByLayer</option></select>
              <Chevron />
            </Combo>
            <Separator />
            <Combo $width={180} $gap={8}>
              <LineSample />
              <select aria-label="linetype"><option>ByLayer</option></select>
              <Chevron />
            </Combo>
            <Tools list={["linePencil"]} />
          </Toolbar>
        </Rebar>

        <Body>
          <SidePanel>
            <DotRow />
            <div><Tools list={drawLeft} vertical /></div>
            <div><Tools list={drawRight} vertical /></div>
          </SidePanel>
          <Center>
            <Drawing />
            <SheetTabs>
              <SheetArrow type="button" aria-label="previous sheet">
                <svg width="6" height="12" fill={G}><path d="M6 0v12L0 6z" /></svg>
              </SheetArrow>
              <SheetArrow type="button" aria-label="next sheet">
                <svg width="6" height="12" fill={G}><path d="M0 0v12l6-6z" /></svg>
              </SheetArrow>
              <SheetTab type="button">
                <svg width="60" height="20" fill="#fff" stroke="#000" aria-hidden="true">
                  <path d="M0 0l9.500 19.500h40L59.500 0" />
                </svg>
                <span>模型</span>
              </SheetTab>
            </SheetTabs>
          </Center>
          <SidePanel $right>
            <DotRow />
            <div><Tools list={dimensionList} vertical /></div>
            <div><Tools list={modifyList} vertical /></div>
          </SidePanel>
        </Body>

        <CommandPanel>
          <History>
            <div>
              <p><span>命令</span>: _DrawRadialDimension</p>
              <p> <span>选择圆弧或圆</span>:</p>
            </div>
            <ScrollV>
              <button type="button" aria-label="scroll up">
                <svg width="10" height="7" fill="none" stroke={G} strokeWidth="2"><path d="M.5 6L5 1.500 9.500 6" /></svg>
              </button>
              <button type="button" aria-label="scroll down">
                <svg width="10" height="7" fill="none" stroke={G} strokeWidth="2"><path d="M.5 1L5 5.500 9.500 1" /></svg>
              </button>
            </ScrollV>
          </History>
          <CommandLine>
            <label htmlFor="command"><span>命令</span>:</label>
            <Caret />
            <input id="command" type="text" />
            <ScrollH>
              <button type="button" aria-label="scroll left">
                <svg width="7" height="10" fill="none" stroke={G} strokeWidth="2"><path d="M6 .500L1.500 5 6 9.500" /></svg>
              </button>
              <i />
              <button type="button" aria-label="scroll right">
                <svg width="7" height="10" fill="none" stroke={G} strokeWidth="2"><path d="M1 .500L5.500 5 1 9.500" /></svg>
              </button>
            </ScrollH>
          </CommandLine>
        </CommandPanel>

        <StatusBar>
          <output>18763.032089,&nbsp; -7140.682716,&nbsp; 0.000000</output>
          {Object.keys(toggles).map((name) => (
            <Toggle key={name} type="button" $on={toggles[name]} aria-pressed={toggles[name]} onClick={() => flip(name)}>
              {name}
            </Toggle>
          ))}
          <a href="#feedback">提交软件问题或增加新功能</a>
          <Brand><MxLogo size={17} />MxCAD</Brand>
        </StatusBar>
      </Window>
    </ThemeProvider>
  );
};

/* ---------- styles ---------- */

const Window = styled.div`
  display: flex;
  flex-direction: column;
  min-height: 100vh;
  background: ${({ theme }) => theme.color.panel};
  border: solid #454a4e;
  border-width: 1px 2px 2px 2px;
  cursor: default;
`;

const TitleBar = styled.header`
  display: flex;
  align-items: center;
  height: 37px;
  padding: 0 1px 0 8px;
  background: #fff;

  h1 {
    flex: 1;
    margin: 0 0 0 5px;
    font-size: 16px;
    font-weight: 400;
    line-height: 22px;
  }

  button {
    display: grid;
    place-items: center;
    width: 58px;
    height: 100%;
  }
`;

const MenuBar = styled.nav`
  display: flex;
  align-items: center;
  gap: 18px;
  height: 30px;
  padding-left: 5px;
  background: linear-gradient(90deg, #f0f0f0, #fbfbfb 60%);

  button {
    margin-bottom: 2px;
    white-space: nowrap;
  }

  button:first-of-type {
    margin-left: -10px;
  }
`;

const Grip = styled.span`
  flex: none;
  width: 3px;
  height: ${({ $size }) => $size}px;
  background: repeating-linear-gradient(#bbb 0 2px, transparent 2px 4px);
`;

const DocTabs = styled.div`
  display: flex;
  align-items: flex-end;
  height: 27px;
  padding-left: 8px;
  background: #efefef;
  border: solid ${({ theme }) => theme.color.line};
  border-width: 1px 0;
`;

const DocTab = styled.button`
  position: relative;
  width: ${({ $width }) => $width}px;
  height: 23px;
  margin-right: -19px;
  margin-bottom: ${({ $active }) => ($active ? "-1px" : 0)};
  padding-left: ${({ $active }) => ($active ? "23px" : "24px")};
  padding-bottom: 1px;
  font-weight: ${({ $active }) => ($active ? 700 : 400)};
  text-align: left;
  white-space: nowrap;

  svg {
    position: absolute;
    inset: 0;
  }

  span {
    position: relative;
  }
`;

const TabControls = styled.div`
  display: flex;
  align-items: center;
  align-self: center;
  gap: 8px;
  margin-left: auto;
  padding-right: 5px;

  button {
    display: grid;
  }
`;

const Rebar = styled.div`
  display: flex;
  flex-direction: column;
  align-items: flex-start;
  gap: 4px;
  padding: 1px 0 3px 4px;
  background: #f8f8f8;
`;

const Toolbar = styled.div`
  display: flex;
  align-items: center;
  height: ${({ $height }) => $height}px;
  padding: 0 1px 0 2px;
  border-radius: 4px;
  background: linear-gradient(#fbfbfb, #eeeeee);

  ${Grip} {
    margin-right: 2px;
  }
`;

const ToolButton = styled.button`
  display: grid;
  flex: none;
  place-items: center;
  width: 38px;
  height: 38px;

  &:hover {
    background: #dcebf7;
  }
`;

const Separator = styled.span`
  flex: none;
  display: block;
  width: ${({ $vertical }) => ($vertical ? "30px" : "1px")};
  height: ${({ $vertical }) => ($vertical ? "1px" : "30px")};
  margin: ${({ $vertical }) => ($vertical ? "2px 4px 3px" : "0 3px 0 2px")};
  background: #b8b8b8;
`;

const Combo = styled.div`
  display: flex;
  align-items: center;
  width: ${({ $width }) => $width}px;
  height: 22px;
  padding: 0 5px 0 ${({ $inset }) => $inset || 2}px;
  background: #fff;
  border: 1px solid #7a7a7a;
  font-family: ${({ theme }) => theme.font.mono};
  font-size: 13px;

  select {
    flex: 1;
    min-width: 0;
    height: 100%;
    margin-left: ${({ $gap }) => $gap}px;
    appearance: none;
    outline: none;
  }
`;

const Body = styled.main`
  display: flex;
  flex: 1;
`;

const SidePanel = styled.aside`
  display: grid;
  grid-template-columns: 38px 38px;
  grid-template-rows: 11px 1fr;
  padding: ${({ $right }) => ($right ? "0 3px" : "0 2px 0 3px")};
  background: linear-gradient(90deg, #fdfdfd, #ededed);
`;

const DotRow = styled.span`
  grid-column: 1 / -1;
  height: 2px;
  margin: 6px 6px 0 3px;
  background: repeating-linear-gradient(90deg, #b0b0b0 0 2px, transparent 2px 4px);
`;

const Center = styled.section`
  display: flex;
  flex: 1;
  flex-direction: column;
  min-width: 0;
  border: solid #808080;
  border-width: 1px 0 0 1px;
`;

const Canvas = styled.svg`
  flex: 1;
  width: 100%;
  min-height: 0;
  background: #000;
`;

const CadText = styled.text`
  fill: #ffff00;
  font-family: Roboto, Lato, sans-serif;
  font-size: 52px;
  font-weight: 100;
`;

const AxisText = styled.text`
  fill: #fff;
  font-family: Roboto, sans-serif;
  font-size: 16px;
  font-weight: 300;
`;

const ScaleText = styled.text`
  fill: #666;
  font-family: "Liberation Sans", sans-serif;
  font-size: 13px;
  text-anchor: middle;
`;

const SheetTabs = styled.div`
  display: flex;
  height: 23px;
  background: #efefef;
  border-top: 1px solid #777;
`;

const SheetArrow = styled.button`
  display: grid;
  place-items: center;
  width: 20px;
  height: 21px;
  background: #f8f8f8;
  border: 1px solid #aaa;
`;

const SheetTab = styled.button`
  position: relative;
  width: 60px;
  height: 20px;
  line-height: 20px;

  svg {
    position: absolute;
    inset: 0;
  }

  span {
    position: relative;
  }
`;

const CommandPanel = styled.section`
  margin-right: 2px;
  border-top: 4px solid #dfdfdf;
  font-family: ${({ theme }) => theme.font.mono};
  font-size: 15px;
  line-height: 22px;

  p span, label span {
    font-size: 17px;
  }
`;

const History = styled.div`
  display: flex;
  height: 48px;
  background: #fff;
  border-top: 2px solid #696969;
  border-left: 2px solid #a0a0a0;
  border-bottom: 1px solid #a0a0a0;

  > div:first-child {
    flex: 1;
    padding-top: 1px;
  }

  p {
    margin: 0;
    padding-left: 2px;
    height: 22px;
    white-space: pre;
  }
`;

const ScrollV = styled.div`
  display: flex;
  flex-direction: column;
  justify-content: space-between;
  width: 21px;
  background: #f0f0f0;

  button {
    display: grid;
    flex: 1;
    place-items: center;
  }
`;

const CommandLine = styled.div`
  display: flex;
  align-items: flex-start;
  height: 26px;
  padding-left: 4px;
  background: #fff;
  border-bottom: 2px solid #f0f0f0;

  label {
    height: 22px;
  }

  input {
    flex: 1;
    min-width: 0;
    height: 22px;
    outline: none;
  }
`;

const Caret = styled.span`
  width: 2px;
  height: 18px;
  margin: 2px 0 0 9px;
  background: #000;
`;

const ScrollH = styled.div`
  display: flex;
  align-self: stretch;
  width: 112px;
  padding-right: 21px;
  background: #f0f0f0;

  button {
    display: grid;
    place-items: center;
    width: 20px;
  }

  button:last-child {
    margin-left: auto;
    width: 24px;
  }

  i {
    width: 21px;
    background: #cdcdcd;
  }
`;

const StatusBar = styled.footer`
  display: flex;
  align-items: center;
  gap: 3px;
  height: 23px;
  padding: 0 4px 0 3px;

  output {
    flex: 1;
    font-size: 16px;
    white-space: nowrap;
  }

  a {
    margin-left: 3px;
    color: #0000f0;
    text-decoration: none;
    white-space: nowrap;
  }
`;

const Toggle = styled.button`
  height: 20px;
  padding: 0 6px 0 1px;
  border: 1px solid ${({ $on }) => ($on ? "#0078d7" : "transparent")};
  background: ${({ $on }) => ($on ? "#deebf7" : "transparent")};
  line-height: 18px;
  white-space: nowrap;
`;

const Brand = styled.strong`
  display: flex;
  align-items: center;
  gap: 3px;
  height: 16px;
  margin-left: 9px;
  padding: 0 4px 0 2px;
  background: #fff;
  color: #26355d;
  font-size: 13px;
  font-weight: 600;
`;

export default App;
